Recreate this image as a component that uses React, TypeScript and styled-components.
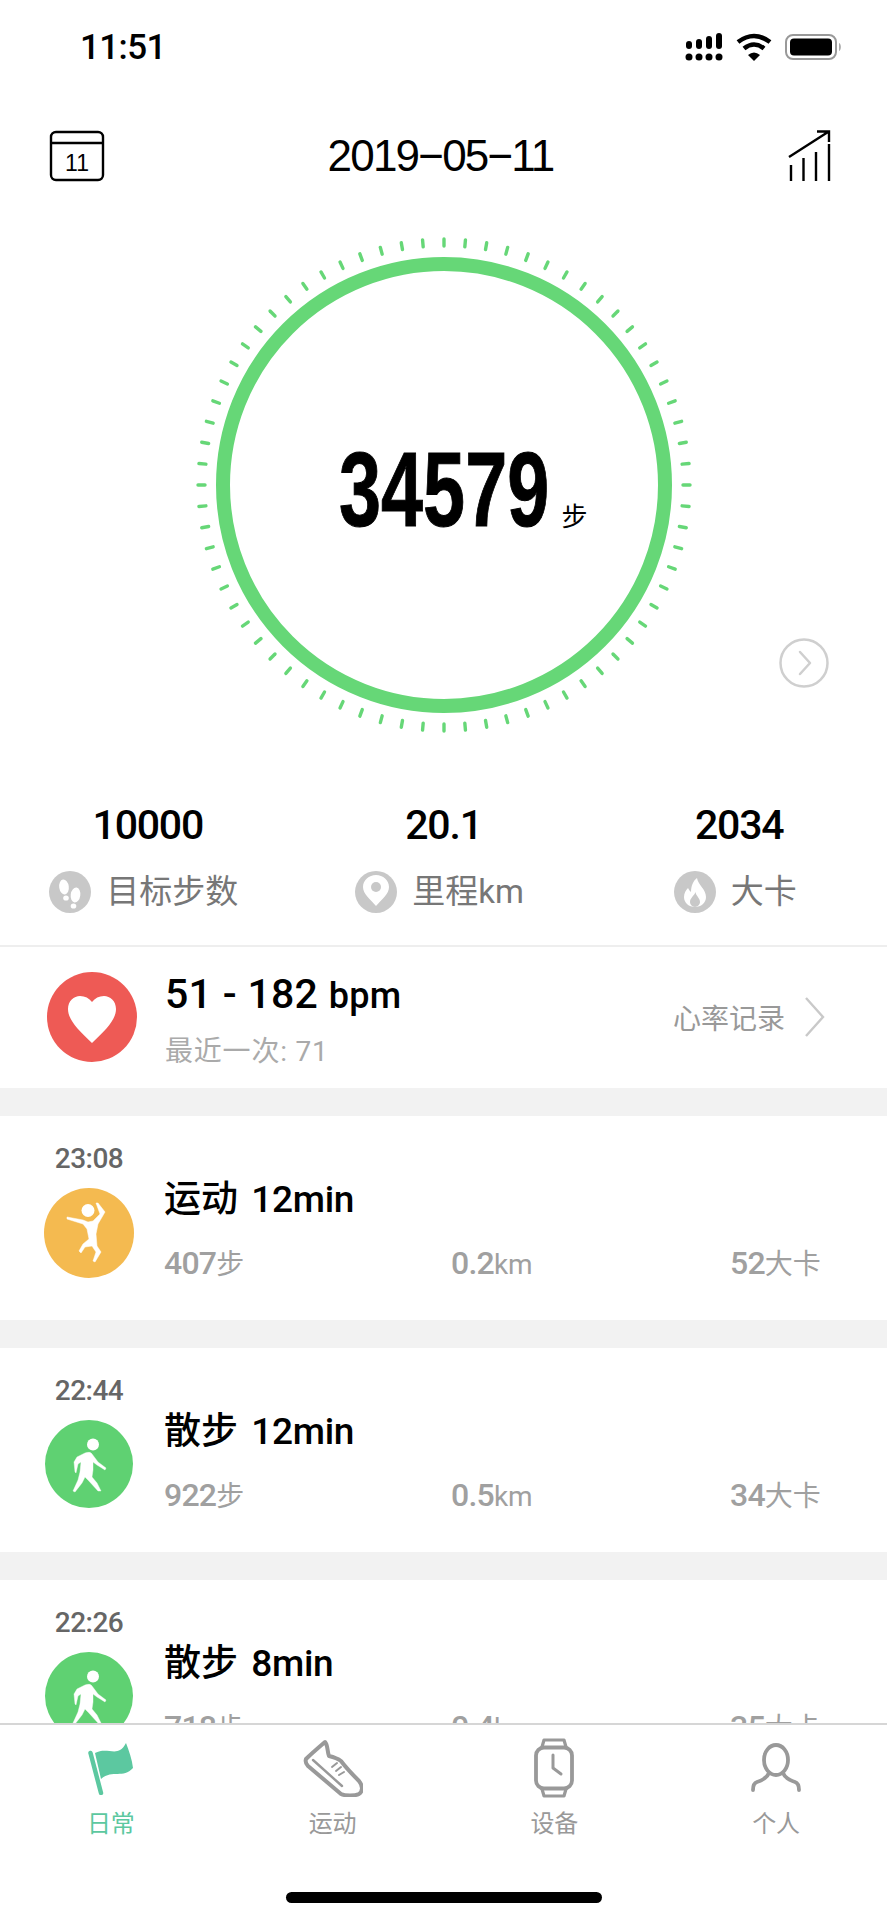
import styled, { createGlobalStyle } from "styled-components";

const GlobalStyle = createGlobalStyle`
  html, body {
    margin: 0;
    padding: 0;
    background: #fff;
  }
  * {
    box-sizing: border-box;
  }
`;

const CJK = `"Noto Sans CJK SC", sans-serif`;
const DIN = `Roboto, "Noto Sans CJK SC", sans-serif`;

const TICKS = Array.from({ length: 72 }, (_, i) => i * 5);

const activities = [
  { time: "23:08", kind: "run", name: "运动", mins: "12min", steps: "407", km: "0.2", cal: "52" },
  { time: "22:44", kind: "walk", name: "散步", mins: "12min", steps: "922", km: "0.5", cal: "34" },
  { time: "22:26", kind: "walk", name: "散步", mins: "8min", steps: "718", km: "0.4", cal: "35" },
];

const JumpIcon = () => (
  <svg width="90" height="90" viewBox="0 0 90 90" fill="#fff" stroke="#fff" strokeWidth="0.5" strokeLinejoin="round">
    <circle cx="44" cy="22.500" r="6.500" stroke="none" />
    <path d="M23 29 L39 32 L44 34 L49 33 L56 26 L52 15 L54 15 L61 24 L54 36 L52 46 L53 58 L57 64 L51 74 L49 73 L52 64 L48 58 L41 59 L37 65 L35 63 L39 56 L45 51 L43 41 L39 36 L23 31 Z" />
  </svg>
);

const WalkIcon = () => (
  <svg width="88" height="88" viewBox="0 0 88 88" fill="#fff" stroke="#fff" strokeWidth="0.4" strokeLinejoin="round">
    <circle cx="48" cy="24.500" r="6" stroke="none" />
    <path d="M40 33 C43 32 46 32 47 34 L53 42 L61 48 L60 50 L52 45 L48 42 L48 50 L47 57 L52 63 L56 71 L53 71 L43 60 L40 57 L37 63 L30 72 L28 71 L33 60 L35 52 L36 42 L33 44 L31 53 L30 52 L29 42 L32 37 Z" />
  </svg>
);

const ChartIcon = () => (
  <svg width="44" height="54" viewBox="0 0 44 54" fill="none" stroke="#000" strokeWidth="2.4">
    <path d="M3 36 V52 M15.500 29 V52 M28 23 V52 M41 15 V52" />
    <path d="M1 28 L40 3 M29 2.500 H41 V13" />
  </svg>
);

const App = () => (
  <>
    <GlobalStyle />
    <Screen>
      <StatusBar>
        <Clock>11:51</Clock>
        <StatusIcons>
          <svg width="38" height="28" viewBox="0 0 38 28" fill="#000">
            <rect x="1" y="8" width="6" height="8" rx="3" />
            <rect x="11" y="6" width="6" height="10" rx="3" />
            <rect x="21" y="3" width="6" height="13" rx="3" />
            <rect x="31" y="0" width="6" height="16" rx="3" />
            <circle cx="4" cy="24" r="3.500" />
            <circle cx="14" cy="24" r="3.500" />
            <circle cx="24" cy="24" r="3.500" />
            <circle cx="34" cy="24" r="3.500" />
          </svg>
          <svg width="36" height="28" viewBox="0 0 36 28" fill="none" stroke="#000" strokeWidth="4.6">
            <path d="M2 9 Q18 -3 34 9" />
            <path d="M8 15.500 Q18 7.500 28 15.500" />
            <path d="M12 22 Q18 17 24 22 L18 28 Z" fill="#000" stroke="none" />
          </svg>
          <svg width="58" height="26" viewBox="0 0 58 26">
            <rect x="1" y="1" width="50" height="24" rx="7" fill="none" stroke="#999" strokeWidth="2" />
            <rect x="5" y="4.500" width="42" height="17" rx="4" fill="#000" />
            <path d="M54 9 C56.500 10 56.500 16 54 17 Z" fill="#aaa" />
          </svg>
        </StatusIcons>
      </StatusBar>

      <Header>
        <CalendarSlot>
          <svg width="56" height="52" viewBox="0 0 56 52" fill="none" stroke="#000" strokeWidth="2.4">
            <rect x="2" y="2" width="52" height="48" rx="5" />
            <path d="M2 13 H54" />
            <CalendarDay x="28" y="41">11</CalendarDay>
          </svg>
        </CalendarSlot>
        <DateTitle>2019−05−11</DateTitle>
        <ChartSlot>
          <ChartIcon />
        </ChartSlot>
      </Header>

      <RingSection>
        <RingBox>
          <svg width="500" height="500" viewBox="-250 -250 500 500" fill="none" stroke="#66d777">
            <circle r="221" strokeWidth="14" />
            {TICKS.map((deg) => (
              <line key={deg} y1="-239" y2="-246" strokeWidth="3.4" strokeLinecap="round" transform={`rotate(${deg})`} />
            ))}
          </svg>
          <StepCount>
            <StepValue>34579</StepValue>
            <StepUnit>步</StepUnit>
          </StepCount>
        </RingBox>
        <NextButton>
          <svg width="50" height="50" viewBox="0 0 50 50" fill="none" stroke="#cfcfcf" strokeWidth="2.5">
            <circle cx="25" cy="25" r="23.500" />
            <path d="M21 14 L31 25 L21 36" strokeLinecap="round" strokeLinejoin="round" />
          </svg>
        </NextButton>
      </RingSection>

      <Stats>
        <Stat>
          <StatValue>10000</StatValue>
          <StatLabel>
            <StatBadge>
              <svg width="42" height="42" viewBox="0 0 42 42" fill="#fff">
                <ellipse cx="15" cy="16" rx="4.800" ry="7.500" transform="rotate(-8 15 16)" />
                <ellipse cx="17" cy="27" rx="2.800" ry="2.600" />
                <ellipse cx="26.500" cy="24" rx="4.800" ry="7.500" transform="rotate(8 26.500 24)" />
                <ellipse cx="24.500" cy="35" rx="2.800" ry="2.600" />
              </svg>
            </StatBadge>
            目标步数
          </StatLabel>
        </Stat>
        <Stat>
          <StatValue>20.1</StatValue>
          <StatLabel>
            <StatBadge>
              <svg width="42" height="42" viewBox="0 0 42 42">
                <path d="M21 35 C15 28 8 23 8 16 C8 9 14 4 21 4 C28 4 34 9 34 16 C34 23 27 28 21 35 Z" fill="#fff" />
                <circle cx="21" cy="16" r="5" fill="#c8c8c8" />
              </svg>
            </StatBadge>
            里程km
          </StatLabel>
        </Stat>
        <Stat>
          <StatValue>2034</StatValue>
          <StatLabel>
            <StatBadge>
              <svg width="42" height="42" viewBox="0 0 42 42">
                <path d="M23 7 C24 14 32 18 32 26 C32 32 27 36 21 36 C15 36 10 32 10 26 C10 22 12 19 14 17 C15 19 16 20 17 21 C17 15 19 10 23 7 Z" fill="#fff" />
                <path d="M21.500 21 C22 25 26 27 26 31 C26 33 24 36 21 36 C18 36 16 33 16 31 C16 27 20 25 21.500 21 Z" fill="#c8c8c8" />
              </svg>
            </StatBadge>
            大卡
          </StatLabel>
        </Stat>
      </Stats>

      <HeartRow>
        <HeartBadge>
          <svg width="90" height="90" viewBox="0 0 90 90">
            <path d="M45 71 C30 57 21 47 21 37 C21 29 27 24 33 24 C38 24 42 26 45 30 C48 26 52 24 57 24 C63 24 69 29 69 37 C69 47 60 57 45 71 Z" fill="#fff" />
          </svg>
        </HeartBadge>
        <HeartText>
          <HeartRange>
            51 - 182 <HeartUnit>bpm</HeartUnit>
          </HeartRange>
          <HeartLatest>最近一次: 71</HeartLatest>
        </HeartText>
        <HeartLink>
          心率记录
          <svg width="20" height="40" viewBox="0 0 20 40" fill="none" stroke="#c9c9c9" strokeWidth="2.4">
            <path d="M1 1 L18 20 L1 39" />
          </svg>
        </HeartLink>
      </HeartRow>

      <Feed>
        {activities.map((a) => (
          <Card key={a.time}>
            <CardLeft>
              <CardTime>{a.time}</CardTime>
              <ActivityBadge $kind={a.kind}>{a.kind === "run" ? <JumpIcon /> : <WalkIcon />}</ActivityBadge>
            </CardLeft>
            <CardBody>
              <CardTitle>
                {a.name} <CardMins>{a.mins}</CardMins>
              </CardTitle>
              <CardStats>
                <span>
                  {a.steps}
                  <CardUnit>步</CardUnit>
                </span>
                <span>
                  {a.km}
                  <CardUnit>km</CardUnit>
                </span>
                <span>
                  {a.cal}
                  <CardUnit>大卡</CardUnit>
                </span>
              </CardStats>
            </CardBody>
          </Card>
        ))}
      </Feed>

      <TabBar>
        <TabRow>
          <Tab $active>
            <TabIcon>
              <svg width="46" height="54" viewBox="0 0 46 54">
                <path d="M7 12 C20 5 30 18 38 2 C41 10 44 18 45 27 C35 38 25 28 13 38 Z" fill="#5cc8a0" />
                <path d="M2.500 12 L13 52" stroke="#5cc8a0" strokeWidth="4.500" strokeLinecap="round" />
              </svg>
            </TabIcon>
            日常
          </Tab>
          <Tab>
            <TabIcon>
              <svg width="60" height="58" viewBox="0 0 60 58" fill="none" stroke="#999" strokeLinecap="round" strokeLinejoin="round">
                <path d="M22 3 C15 9 8 15 3 20 C2 23 3 25 5 27 L38 55 C42 57 52 57 56 55 C60 52 60 47 56 42 C50 36 44 30 38 22 C34 19 30 18 26 17 C24 12 25 6 22 3 Z" strokeWidth="4" />
                <path d="M10 21 L39 47" strokeWidth="2.400" />
                <path d="M34 24 L29 28 M38 28 L33 32 M41 33 L36 36" strokeWidth="2" />
              </svg>
            </TabIcon>
            运动
          </Tab>
          <Tab>
            <TabIcon>
              <svg width="40" height="60" viewBox="0 0 40 60" fill="none" stroke="#999" strokeLinejoin="round" strokeLinecap="round">
                <rect x="2" y="9.500" width="36" height="41" rx="8" strokeWidth="3.800" />
                <path d="M8 9 L10 2 H30 L32 9 M8 51 L10 58 H30 L32 51" strokeWidth="3.200" />
                <path d="M19 17 V30 L27 36" strokeWidth="3" />
              </svg>
            </TabIcon>
            设备
          </Tab>
          <Tab>
            <TabIcon>
              <svg width="50" height="50" viewBox="0 0 50 50" fill="none" stroke="#999" strokeWidth="3.800" strokeLinecap="round" strokeLinejoin="round">
                <ellipse cx="25" cy="17" rx="12" ry="15" />
                <path d="M18 30 C16 35 12 37 6 39 C3 40 2 43 2 47 M32 30 C34 35 38 37 44 39 C47 40 48 43 48 47" />
              </svg>
            </TabIcon>
            个人
          </Tab>
        </TabRow>
        <HomeBar />
      </TabBar>
    </Screen>
  </>
);

export default App;

const Screen = styled.div`
  width: 887px;
  height: 1920px;
  display: flex;
  flex-direction: column;
  overflow: hidden;
  background: #fff;
`;

const StatusBar = styled.div`
  height: 94px;
  flex: none;
  display: flex;
  align-items: center;
  justify-content: space-between;
  padding: 0 44px 0 80px;
`;

const Clock = styled.div`
  font: 500 35px Roboto, sans-serif;
  letter-spacing: -0.6px;
  color: #000;
`;

const StatusIcons = styled.div`
  display: flex;
  align-items: center;
  gap: 13px;
`;

const Header = styled.div`
  height: 122px;
  flex: none;
  display: grid;
  grid-template-columns: 1fr auto 1fr;
  align-items: center;
  padding: 2px 55px 0 49px;
`;

const CalendarSlot = styled.div`
  display: flex;
`;

const ChartSlot = styled.div`
  display: flex;
  justify-content: flex-end;
`;

const CalendarDay = styled.text`
  font: 400 23px "Liberation Sans", sans-serif;
  fill: #000;
  stroke: none;
  text-anchor: middle;
`;

const DateTitle = styled.div`
  font: 400 44px "Liberation Sans", sans-serif;
  letter-spacing: -1.800px;
  color: #000;
`;

const RingSection = styled.div`
  position: relative;
  height: 516px;
  flex: none;
  padding-top: 19px;
  display: flex;
  justify-content: center;
`;

const RingBox = styled.div`
  position: relative;
  width: 500px;
  height: 500px;
`;

const StepCount = styled.div`
  position: absolute;
  left: 145px;
  top: 190px;
  display: flex;
  align-items: baseline;
  white-space: nowrap;
`;

/* no condensed face is available, so the bold digits are squeezed to width */
const StepValue = styled.span`
  display: inline-block;
  width: 210px;
  font: 700 105px/130px "Liberation Sans", sans-serif;
  -webkit-text-stroke: 1px #000;
  color: #000;
  transform: scaleX(0.72);
  transform-origin: left center;
`;

const StepUnit = styled.span`
  font: 400 26px ${CJK};
  color: #000;
  margin-left: 13px;
`;

const NextButton = styled.div`
  position: absolute;
  left: 779px;
  top: 422px;
  width: 50px;
  height: 50px;
`;

const Stats = styled.div`
  height: 215px;
  flex: none;
  display: grid;
  grid-template-columns: repeat(3, 1fr);
  padding-top: 65px;
  border-bottom: 2px solid #eee;
`;

const Stat = styled.div`
  display: flex;
  flex-direction: column;
  align-items: center;
`;

const StatValue = styled.div`
  font: 500 41px/56px ${DIN};
  letter-spacing: -1.2px;
  color: #000;
`;

const StatLabel = styled.div`
  display: flex;
  align-items: center;
  gap: 15px;
  margin-top: 18px;
  padding-right: 8px;
  font: 400 33px/42px ${DIN};
  color: #777;
`;

const StatBadge = styled.div`
  width: 42px;
  height: 42px;
  border-radius: 50%;
  background: #c8c8c8;
  display: flex;
`;

const HeartRow = styled.div`
  height: 141px;
  flex: none;
  display: flex;
  align-items: center;
  padding: 0 62px 2px 47px;
`;

const HeartBadge = styled.div`
  width: 90px;
  height: 90px;
  border-radius: 50%;
  background: #ee5a55;
  display: flex;
`;

const HeartText = styled.div`
  margin-left: 28px;
  padding-top: 5px;
  display: flex;
  flex-direction: column;
`;

const HeartRange = styled.div`
  font: 500 41px/52px ${DIN};
  letter-spacing: 0.3px;
  color: #000;
`;

const HeartUnit = styled.span`
  font-size: 36px;
`;

const HeartLatest = styled.div`
  font: 400 28px/36px ${DIN};
  letter-spacing: 0.8px;
  color: #aaa;
  margin-top: 12px;
`;

const HeartLink = styled.div`
  margin-left: auto;
  display: flex;
  align-items: center;
  gap: 20px;
  font: 400 28px ${CJK};
  color: #999;
`;

const Feed = styled.div`
  flex: 1;
  min-height: 0;
  overflow: hidden;
  background: #f2f2f2;
  display: flex;
  flex-direction: column;
  gap: 28px;
  padding-top: 28px;
`;

const Card = styled.div`
  height: 204px;
  flex: none;
  background: #fff;
  display: flex;
  padding-left: 44px;
`;

const CardLeft = styled.div`
  width: 90px;
  flex: none;
  display: flex;
  flex-direction: column;
  align-items: center;
  padding-top: 31px;
`;

const CardTime = styled.div`
  height: 41px;
  font: 500 28px/24px ${DIN};
  letter-spacing: -0.5px;
  color: #666;
`;

const ActivityBadge = styled.div<{ $kind: string }>`
  width: ${(p) => (p.$kind === "run" ? "90px" : "88px")};
  height: ${(p) => (p.$kind === "run" ? "90px" : "88px")};
  border-radius: 50%;
  background: ${(p) => (p.$kind === "run" ? "#f4ba50" : "#5fd172")};
  display: flex;
`;

const CardBody = styled.div`
  flex: 1;
  margin-left: 30px;
  padding-top: 55px;
`;

const CardTitle = styled.div`
  font: 500 37px/50px ${CJK};
  color: #000;
  white-space: pre;
`;

const CardMins = styled.span`
  font: 500 37px/50px ${DIN};
  letter-spacing: -0.3px;
  margin-left: 5px;
`;

const CardStats = styled.div`
  display: grid;
  grid-template-columns: 287px 279px auto;
  margin-top: 18px;
  font: 500 32px/40px ${DIN};
  letter-spacing: -0.8px;
  color: #a0a0a0;
`;

const CardUnit = styled.span`
  font-size: 28px;
  font-weight: 400;
  letter-spacing: 0;
`;

const TabBar = styled.div`
  height: 197px;
  flex: none;
  background: #fff;
  border-top: 2px solid #d6d6d6;
  display: flex;
  flex-direction: column;
  align-items: center;
`;

const TabRow = styled.div`
  width: 100%;
  display: grid;
  grid-template-columns: repeat(4, 1fr);
  padding-top: 13px;
`;

const Tab = styled.div<{ $active?: boolean }>`
  display: flex;
  flex-direction: column;
  align-items: center;
  font: 400 24px/30px ${CJK};
  color: ${(p) => (p.$active ? "#5cc8a0" : "#999")};
`;

const TabIcon = styled.div`
  height: 60px;
  margin-bottom: 9px;
  display: flex;
  align-items: center;
`;

const HomeBar = styled.div`
  width: 316px;
  height: 11px;
  margin-top: 55px;
  border-radius: 6px;
  background: #000;
`;
